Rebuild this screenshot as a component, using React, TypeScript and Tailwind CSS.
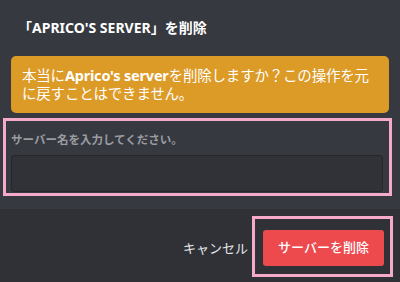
import React from 'react';

const font = { fontFamily: '"Noto Sans", "Noto Sans CJK JP", sans-serif' };

export default function App() {
  return (
    <div className="w-[400px] h-[282px] bg-[#36393f] flex flex-col overflow-hidden" style={font}>
      <div className="pt-[18px] px-[18px]">
        <h2 className="text-[14px] leading-[20px] font-bold text-white">「APRICO'S SERVER」を削除</h2>
      </div>

      <div className="mt-[18px] mx-[11px] rounded-[5px] bg-[#dc9a26] pl-[11px] pr-[6px] pt-[10px] pb-[11px]">
        <p className="text-[14.5px] leading-[18px] tracking-[-0.2px] text-white">
          本当に<span className="font-bold">Aprico's server</span>を削除しますか？この操作を元に戻すことはできません。
        </p>
      </div>

      <div className="mt-[5px] ml-[3px] w-[389px] border-[3px] border-[#f5aac9] pl-[5px] pr-[6px] pt-[11px] pb-[1px]">
        <label className="block text-[11.5px] leading-[16px] font-semibold text-[#9a9ca1]">サーバー名を入力してください。</label>
        <div className="mt-[7px] h-[37px] rounded-[3px] bg-[#303237] border border-[#25272b]"></div>
      </div>

      <div className="mt-[13px] flex-1 bg-[#2f3136] flex items-start justify-end pr-[7px] pt-[7px]">
        <button className="mt-[24px] mr-[4px] text-[13px] leading-[16px] text-[#e6e7e8]">キャンセル</button>
        <div className="border-[3px] border-[#f5aac9] pl-[8px] pr-[6px] pt-[11px] pb-[8px]">
          <button className="w-[121px] h-[36px] rounded-[3px] bg-[#ed4a4e] text-white text-[13px] font-medium">サーバーを削除</button>
        </div>
      </div>
    </div>
  );
}
